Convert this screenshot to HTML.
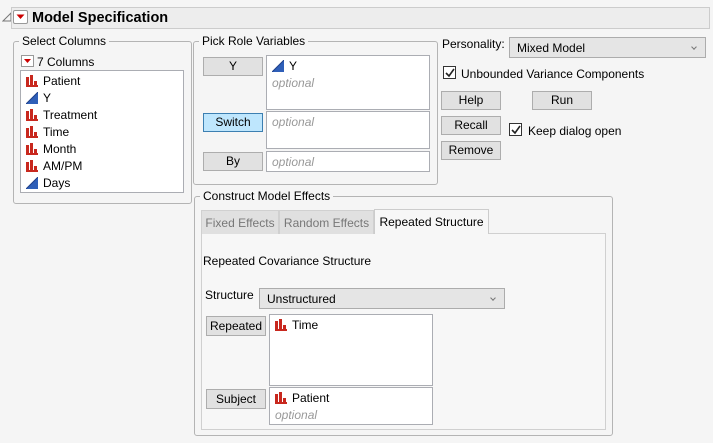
<!DOCTYPE html>
<html><head><style>
*{box-sizing:border-box;margin:0;padding:0}
body{width:713px;height:443px;background:#f5f5f5;font-family:"Liberation Sans",sans-serif;font-size:12px;color:#000;position:relative;overflow:hidden}
.a{position:absolute}
.grp{position:absolute;border:1px solid #b4b4b4;border-radius:3px}
.lbl{position:absolute;background:#f5f5f5;padding:0 3px;top:-8px;left:5px;font-size:12px;line-height:14px}
.btn{position:absolute;background:#e1e1e1;border:1px solid #adadad;text-align:center;line-height:17px;font-size:12px}
.box{position:absolute;background:#fff;border:1px solid #abadb3}
.opt{color:#999;font-style:italic}
.it{position:absolute;left:5px;height:14px;line-height:15px;white-space:nowrap}
.it svg{vertical-align:-2px;margin-right:5px}
.dd{position:absolute;background:#e5e5e5;border:1px solid #acacac;padding-left:7px;line-height:20px}
.dd:after{content:"";position:absolute;right:9px;top:7px;width:3px;height:3px;border-right:1px solid #777;border-bottom:1px solid #777;transform:rotate(45deg)}
.cb{position:absolute;width:13px;height:13px;border:1px solid #333;background:#fff}
.cb svg{position:absolute;left:1px;top:1px}
.tab{position:absolute;background:#e0e0e0;border:1px solid #d0d0d0;border-bottom:none;color:#777;line-height:24px;text-align:center}
</style></head><body>
<svg class="a" style="left:2px;top:12px" width="10" height="10"><path d="M9 1 L9 9 L1 9 Z" fill="none" stroke="#777"/></svg>
<div class="a" style="left:11px;top:7px;width:699px;height:22px;background:#ededed;border:1px solid #ccc"></div>
<div class="a" style="left:13px;top:10px;width:15px;height:14px;border:1px solid #999;background:#fff;border-radius:2px"><svg width="13" height="12" class="a" style="left:0;top:0"><path d="M2.5 3.5 L10.5 3.5 L6.5 8 Z" fill="#c00"/></svg></div>
<div class="a" style="left:32px;top:9px;font-size:14.5px;font-weight:bold;line-height:19px">Model Specification</div>

<div class="grp" style="left:13px;top:41px;width:179px;height:163px"><div class="lbl">Select Columns</div></div>
<div class="a" style="left:21px;top:55px;width:13px;height:12px;border:1px solid #999;background:#fff"><svg width="11" height="10" class="a"><path d="M2 3 L9 3 L5.5 7 Z" fill="#c00"/></svg></div>
<div class="a" style="left:37px;top:55px;line-height:14px">7 Columns</div>
<div class="box" style="left:20px;top:70px;width:164px;height:123px">
<svg width="0" height="0" style="position:absolute"><defs>
<g id="n"><rect x="0" y="2" width="3" height="10" fill="#c8281e"/><rect x="4" y="0" width="3" height="12" fill="#c8281e"/><rect x="8" y="6" width="3" height="6" fill="#c8281e"/><rect x="0" y="10" width="12" height="2" fill="#c8281e"/></g>
<g id="c"><path d="M0 12 L12 0 L12 12 Z" fill="#2f5fb8"/><path d="M0 12 L12 0" stroke="#1d3f8a"/></g></defs></svg>
<div class="it" style="top:3px"><svg width="12" height="12"><use href="#n"/></svg>Patient</div>
<div class="it" style="top:20px"><svg width="12" height="12"><use href="#c"/></svg>Y</div>
<div class="it" style="top:37px"><svg width="12" height="12"><use href="#n"/></svg>Treatment</div>
<div class="it" style="top:54px"><svg width="12" height="12"><use href="#n"/></svg>Time</div>
<div class="it" style="top:71px"><svg width="12" height="12"><use href="#n"/></svg>Month</div>
<div class="it" style="top:88px"><svg width="12" height="12"><use href="#n"/></svg>AM/PM</div>
<div class="it" style="top:105px"><svg width="12" height="12"><use href="#c"/></svg>Days</div>
</div>

<div class="grp" style="left:193px;top:41px;width:245px;height:144px"><div class="lbl">Pick Role Variables</div></div>
<div class="btn" style="left:203px;top:57px;width:60px;height:19px">Y</div>
<div class="box" style="left:266px;top:55px;width:164px;height:55px">
<div class="it" style="top:3px"><svg width="12" height="12"><use href="#c"/></svg>Y</div>
<div class="it opt" style="top:20px">optional</div></div>
<div class="btn" style="left:203px;top:113px;width:60px;height:19px;background:#bee6fd;border-color:#3c7fb1">Switch</div>
<div class="box" style="left:266px;top:111px;width:164px;height:38px"><div class="it opt" style="top:3px">optional</div></div>
<div class="btn" style="left:203px;top:152px;width:60px;height:19px">By</div>
<div class="box" style="left:266px;top:151px;width:164px;height:21px"><div class="it opt" style="top:3px">optional</div></div>

<div class="a" style="left:442px;top:37px;line-height:14px">Personality:</div>
<div class="dd" style="left:509px;top:37px;width:197px;height:21px;line-height:20px">Mixed Model</div>
<div class="cb" style="left:443px;top:66px"><svg width="10" height="10"><path d="M1 5 L4 8 L9 1" fill="none" stroke="#222" stroke-width="1.6"/></svg></div>
<div class="a" style="left:461px;top:67px;line-height:14px">Unbounded Variance Components</div>
<div class="btn" style="left:441px;top:91px;width:60px;height:19px">Help</div>
<div class="btn" style="left:532px;top:91px;width:60px;height:19px">Run</div>
<div class="btn" style="left:441px;top:116px;width:60px;height:19px">Recall</div>
<div class="cb" style="left:509px;top:123px"><svg width="10" height="10"><path d="M1 5 L4 8 L9 1" fill="none" stroke="#222" stroke-width="1.6"/></svg></div>
<div class="a" style="left:528px;top:124px;line-height:14px">Keep dialog open</div>
<div class="btn" style="left:441px;top:141px;width:60px;height:19px">Remove</div>

<div class="grp" style="left:194px;top:196px;width:419px;height:240px"><div class="lbl">Construct Model Effects</div></div>
<div class="a" style="left:201px;top:233px;width:405px;height:197px;border:1px solid #d0d0d0;background:#f7f7f7"></div>
<div class="tab" style="left:201px;top:210px;width:78px;height:24px">Fixed Effects</div>
<div class="tab" style="left:279px;top:210px;width:95px;height:24px">Random Effects</div>
<div class="tab" style="left:374px;top:209px;width:115px;height:25px;background:#f7f7f7;color:#000;border-color:#ccc">Repeated Structure</div>
<div class="a" style="left:203px;top:254px;line-height:14px">Repeated Covariance Structure</div>
<div class="a" style="left:205px;top:288px;line-height:14px">Structure</div>
<div class="dd" style="left:259px;top:288px;width:246px;height:21px">Unstructured</div>
<div class="btn" style="left:206px;top:316px;width:60px;height:20px;line-height:19px">Repeated</div>
<div class="box" style="left:269px;top:314px;width:164px;height:72px"><div class="it" style="top:3px"><svg width="12" height="12"><use href="#n"/></svg>Time</div></div>
<div class="btn" style="left:206px;top:389px;width:60px;height:20px;line-height:19px">Subject</div>
<div class="box" style="left:269px;top:387px;width:164px;height:38px">
<div class="it" style="top:3px"><svg width="12" height="12"><use href="#n"/></svg>Patient</div>
<div class="it opt" style="top:20px">optional</div></div>
</body></html>
